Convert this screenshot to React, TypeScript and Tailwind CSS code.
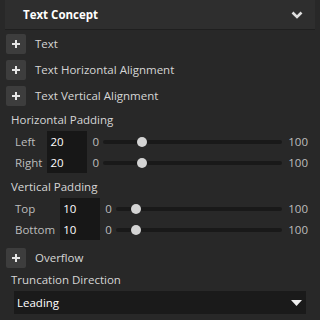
import React from "react";

function PlusButton() {
  return (
    <div className="w-[20px] h-[20px] rounded-[2px] bg-[#3d3d3d] flex items-center justify-center shrink-0">
      <svg width="10" height="10" viewBox="0 0 10 10">
        <rect x="4" y="1" width="2" height="8" fill="#e6e6e6" />
        <rect x="1" y="4" width="8" height="2" fill="#e6e6e6" />
      </svg>
    </div>
  );
}

function PlusRow({ label }: { label: string }) {
  return (
    <div className="flex items-center h-[20px] pl-[6px]">
      <PlusButton />
      <span className="ml-[9px] text-[#d6d6d6]">{label}</span>
    </div>
  );
}

function Slider({ value }: { value: number }) {
  return (
    <div className="relative h-[20px] flex items-center">
      <div className="w-full h-[4px] rounded-full bg-[#191919]" />
      <div
        className="absolute top-1/2 w-[10px] h-[10px] -mt-[5px] rounded-full bg-[#d4d4d4]"
        style={{ left: `calc((100% - 10px) * ${value / 100})` }}
      />
    </div>
  );
}

function PaddingGroup({
  title,
  rows,
}: {
  title: string;
  rows: { label: string; value: number }[];
}) {
  return (
    <div>
      <div className="pl-[11px] h-[16px] leading-[16px] text-[#d6d6d6]">{title}</div>
      <div className="grid grid-cols-[auto_40px_auto_1fr_auto] items-center pl-[15px] pr-[12px] mt-[3px]">
        {rows.map((r) => (
          <React.Fragment key={r.label}>
            <span className="text-[#bdbdbd] pt-[1px] mr-[5px]">{r.label}</span>
            <div className="h-[21px] bg-[#171717] text-white flex items-center pl-[3px]">
              {r.value}
            </div>
            <span className="text-[#bdbdbd] ml-[5px] mr-[4px]">0</span>
            <Slider value={r.value} />
            <span className="text-[#bdbdbd] ml-[6px]">100</span>
          </React.Fragment>
        ))}
      </div>
    </div>
  );
}

export default function App() {
  return (
    <div
      className="w-[320px] h-[320px] bg-[#282828] overflow-hidden text-[11.5px] leading-[16px]"
      style={{ fontFamily: '"Open Sans", "Noto Sans", sans-serif' }}
    >
      <div className="mx-[5px] h-[30px] bg-[#2e2e2e] border-b border-[#1f1f1f] flex items-center justify-between pl-[18px] pr-[12px]">
        <span className="font-bold text-white text-[11.5px] pt-[1px]">Text Concept</span>
        <svg width="12" height="8" viewBox="0 0 12 8">
          <path d="M1.5 1.5 L6 6 L10.5 1.5" stroke="#dedede" strokeWidth="2.6" fill="none" />
        </svg>
      </div>
      <div className="flex flex-col gap-[6px] mt-[4px]">
        <PlusRow label="Text" />
        <PlusRow label="Text Horizontal Alignment" />
        <PlusRow label="Text Vertical Alignment" />
      </div>
      <div className="mt-[6px]">
        <PaddingGroup
          title="Horizontal Padding"
          rows={[
            { label: "Left", value: 20 },
            { label: "Right", value: 20 },
          ]}
        />
      </div>
      <div className="mt-[6px]">
        <PaddingGroup
          title="Vertical Padding"
          rows={[
            { label: "Top", value: 10 },
            { label: "Bottom", value: 10 },
          ]}
        />
      </div>
      <div className="mt-[8px]">
        <PlusRow label="Overflow" />
      </div>
      <div className="pl-[11px] mt-[4px] h-[16px] text-[#d6d6d6]">Truncation Direction</div>
      <div className="mx-[14px] mt-[3px] h-[23px] bg-[#1a1a1a] flex items-center justify-between pl-[3px] pr-[4px]">
        <span className="text-white">Leading</span>
        <svg width="11" height="6" viewBox="0 0 11 6">
          <path d="M0 0 L11 0 L5.5 6 Z" fill="#f0f0f0" />
        </svg>
      </div>
    </div>
  );
}
